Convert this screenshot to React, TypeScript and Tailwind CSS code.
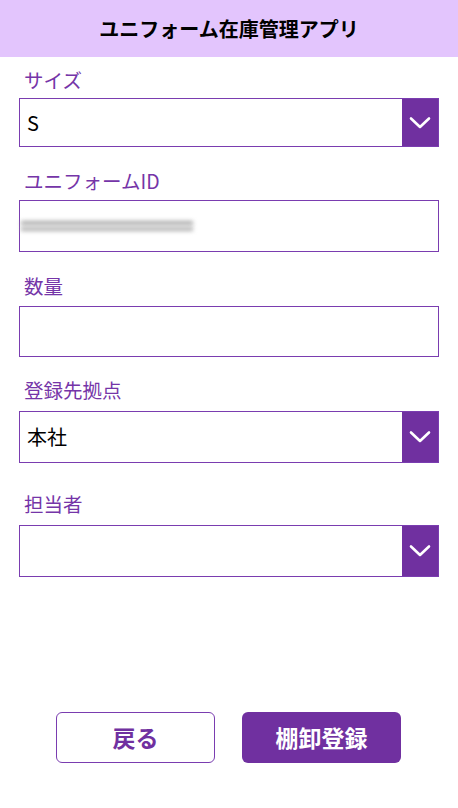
const font = { fontFamily: '"Noto Sans CJK JP", "Noto Sans", sans-serif' };

function Chevron() {
  return (
    <svg width="22" height="14" viewBox="0 0 22 14" fill="none">
      <path d="M2 2.5 L11 11 L20 2.5" stroke="white" strokeWidth="2.6" strokeLinecap="round" strokeLinejoin="round" />
    </svg>
  );
}

function Field({
  label,
  mt,
  gap,
  h,
  value,
  select,
  blurred,
}: {
  label: string;
  mt: string;
  gap: string;
  h: string;
  value?: string;
  select?: boolean;
  blurred?: boolean;
}) {
  return (
    <div className={mt}>
      <div className={`pl-[24px] text-[19.5px] leading-[24px] text-[#7535a8] ${gap}`}>{label}</div>
      <div className={`mx-[19px] flex border-[1.5px] border-[#7a3db0] bg-white ${h}`}>
        <div className="flex flex-1 items-center pl-[7px] text-[20px] text-black">
          {value}
          {blurred && (
            <div className="relative -ml-[6px] h-[24px] w-[175px]">
              <div className="absolute left-0 top-[7px] h-[4px] w-[172px] bg-[#a8a8a8] blur-[2px]" />
              <div className="absolute left-0 top-[13px] h-[4px] w-[172px] bg-[#b0b0b0] blur-[2px]" />
            </div>
          )}
        </div>
        {select && (
          <div className="flex w-[36px] items-center justify-center bg-[#7030a0]">
            <Chevron />
          </div>
        )}
      </div>
    </div>
  );
}

export default function App() {
  return (
    <div className="relative h-[808px] w-[458px] bg-white" style={font}>
      <div className="flex h-[57px] items-center justify-center bg-[#e3c5fd]">
        <h1 className="text-[20px] font-bold text-black">ユニフォーム在庫管理アプリ</h1>
      </div>

      <Field label="サイズ" mt="mt-[11px]" gap="mb-[6px]" h="h-[49px]" value="S" select />
      <Field label="ユニフォームID" mt="mt-[22px]" gap="mb-[7px]" h="h-[52px]" blurred />
      <Field label="数量" mt="mt-[22px]" gap="mb-[8px]" h="h-[51px]" />
      <Field label="登録先拠点" mt="mt-[21px]" gap="mb-[9px]" h="h-[52px]" value="本社" select />
      <Field label="担当者" mt="mt-[29px]" gap="mb-[9px]" h="h-[52px]" select />

      <div className="absolute left-0 top-[712px] flex w-full gap-[27px] pl-[56px]">
        <button className="h-[51px] w-[159px] rounded-[6px] border-[1.5px] border-[#7a3db0] bg-white text-[23px] font-bold text-[#7030a0]">
          戻る
        </button>
        <button className="h-[51px] w-[159px] rounded-[6px] bg-[#7030a0] text-[23px] font-bold text-white">
          棚卸登録
        </button>
      </div>
    </div>
  );
}
